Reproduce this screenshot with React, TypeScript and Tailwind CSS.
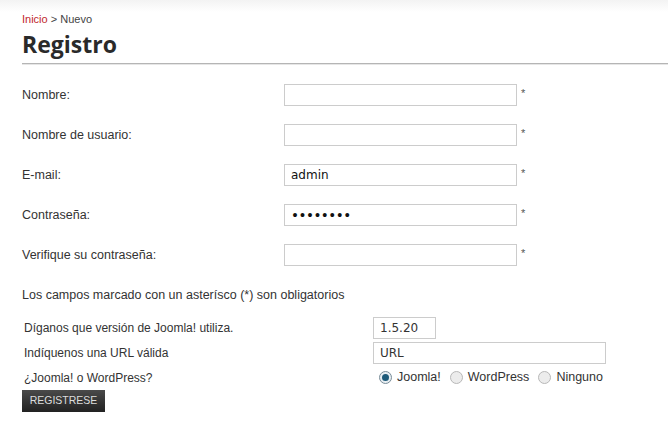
import React from "react";

const fields = [
  { label: "Nombre:", value: "", type: "text" },
  { label: "Nombre de usuario:", value: "", type: "text" },
  { label: "E-mail:", value: "admin", type: "text" },
  { label: "Contraseña:", value: "••••••••", type: "pw" },
  { label: "Verifique su contraseña:", value: "", type: "text" },
];

function Radio({ checked }: { checked?: boolean }) {
  return (
    <span
      className={
        "inline-flex h-[13px] w-[13px] items-center justify-center rounded-full border " +
        (checked ? "border-[#7a8d99] bg-[#e8eef2]" : "border-[#b8b8b8] bg-[#ececec]")
      }
    >
      {checked && <span className="h-[7px] w-[7px] rounded-full bg-[#1d5a79]" />}
    </span>
  );
}

export default function App() {
  return (
    <div
      className="h-[424px] w-[668px] bg-gradient-to-b from-[#f3f3f3] via-white to-white text-[#333]"
      style={{ fontFamily: '"Liberation Sans", Arial, sans-serif', backgroundSize: "100% 24px", backgroundRepeat: "no-repeat", backgroundColor: "#fff" }}
    >
      <div className="pl-[22px] pt-[12px]">
        <div className="text-[11px] leading-[14px] text-[#444]">
          <span className="text-[#c1272d]">Inicio</span> &gt; Nuevo
        </div>
        <h1
          className="mt-[4px] text-[23px] font-bold leading-[28px] text-[#2a2a2a]"
          style={{ fontFamily: '"Open Sans", sans-serif' }}
        >
          Registro
        </h1>
      </div>
      <div className="ml-[22px] mt-[5px] h-[2px] border-t border-[#b5b5b5] bg-[#e6e6e6]" />

      <div className="mt-[10px] pl-[22px]">
        {fields.map((f) => (
          <div key={f.label} className="flex h-[40px] items-center text-[12.5px]">
            <div className="w-[262px]">{f.label}</div>
            <div className="flex h-[22px] w-[233px] items-center border border-[#ccc] bg-white px-[6px] text-[#111]" style={{ fontFamily: '"DejaVu Sans", sans-serif', fontSize: 12 }}>
              {f.type === "pw" ? (
                <span className="text-[13.5px] tracking-[-0.5px]">{f.value}</span>
              ) : (
                f.value
              )}
            </div>
            <span className="ml-[4px] -mt-[3px] text-[11px] text-[#555]">*</span>
          </div>
        ))}
        <div className="flex h-[40px] items-center text-[12.5px]">
          Los campos marcado con un asterísco (*) son obligatorios
        </div>
      </div>

      <div className="pl-[24px] text-[12px]">
        <div className="flex h-[25px] items-center">
          <div className="w-[349px]">Díganos que versión de Joomla! utiliza.</div>
          <div className="flex h-[22px] w-[63px] items-center border border-[#ccc] px-[6px]" style={{ fontFamily: '"DejaVu Sans", sans-serif' }}>
            1.5.20
          </div>
        </div>
        <div className="flex h-[25px] items-center">
          <div className="w-[349px]">Indíquenos una URL válida</div>
          <div className="flex h-[22px] w-[233px] items-center border border-[#ccc] px-[6px]" style={{ fontFamily: '"DejaVu Sans", sans-serif' }}>
            URL
          </div>
        </div>
        <div className="flex h-[25px] items-center">
          <div className="w-[355px]">¿Joomla! o WordPress?</div>
          <div className="flex items-center gap-[5px] text-[12.5px]">
            <Radio checked />
            <span className="mr-[4px]">Joomla!</span>
            <Radio />
            <span className="mr-[4px]">WordPress</span>
            <Radio />
            <span>Ninguno</span>
          </div>
        </div>
      </div>
      <div className="pl-[22px]">
        <button className="flex h-[22px] w-[83px] items-center justify-center bg-gradient-to-b from-[#4a4a4a] to-[#222] text-[10.5px] text-[#ddd]">
          REGISTRESE
        </button>
      </div>
    </div>
  );
}
